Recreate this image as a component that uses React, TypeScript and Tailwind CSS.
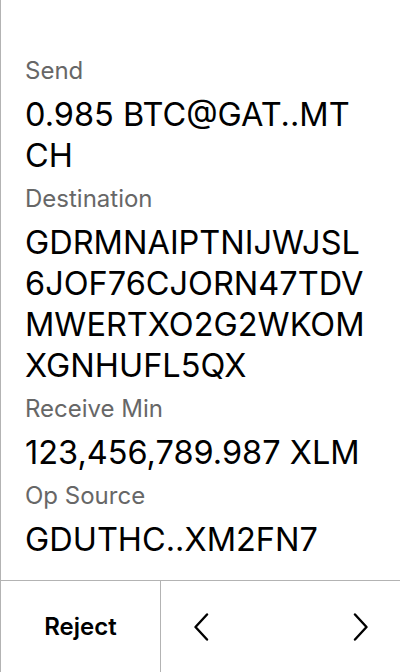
const fields: { label: string; lines: string[] }[] = [
  { label: "Send", lines: ["0.985 BTC@GAT..MT", "CH"] },
  {
    label: "Destination",
    lines: ["GDRMNAIPTNIJWJSL", "6JOF76CJORN47TDV", "MWERTXO2G2WKOM", "XGNHUFL5QX"],
  },
  { label: "Receive Min", lines: ["123,456,789.987 XLM"] },
  { label: "Op Source", lines: ["GDUTHC..XM2FN7"] },
];

const Chevron = ({ dir }: { dir: "left" | "right" }) => (
  <svg width="16" height="28" viewBox="0 0 16 28" fill="none">
    <path
      d={dir === "left" ? "M14 1.5 L2.5 14 L14 26.5" : "M2 1.5 L13.5 14 L2 26.5"}
      stroke="#000"
      strokeWidth="2.4"
      strokeLinecap="round"
      strokeLinejoin="round"
    />
  </svg>
);

export default function App() {
  return (
    <div
      className="w-[400px] h-[672px] bg-white border-l border-[#b3b3b3] flex flex-col"
      style={{ fontFamily: "Inter, 'Noto Sans', sans-serif" }}
    >
      {/* details */}
      <div className="flex-1 pt-[48px] pl-[24px] pr-[20px]">
        {fields.map((f) => (
          <div key={f.label}>
            <div className="text-[24px] leading-[46px] text-[#676767]">{f.label}</div>
            {f.lines.map((l) => (
              <div key={l} className="text-[32.5px] leading-[41px] text-black whitespace-nowrap">
                {l}
              </div>
            ))}
          </div>
        ))}
      </div>

      {/* actions */}
      <div className="h-[92px] border-t border-[#b3b3b3] flex">
        <button className="w-[160px] border-r border-[#b3b3b3] text-[24px] font-semibold text-black">
          Reject
        </button>
        <div className="flex-1 flex items-center justify-between pl-[32px] pr-[31px]">
          <button>
            <Chevron dir="left" />
          </button>
          <button>
            <Chevron dir="right" />
          </button>
        </div>
      </div>
    </div>
  );
}
